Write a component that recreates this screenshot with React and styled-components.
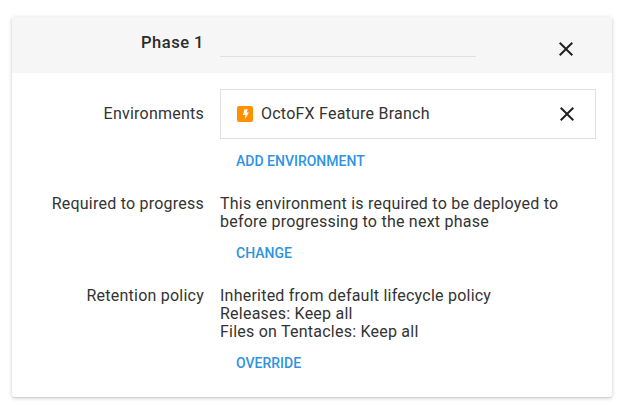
import React from "react";
import styled, { createGlobalStyle } from "styled-components";

const Global = createGlobalStyle`
  * { box-sizing: border-box; }
  body { margin: 0; background: #fff; font-family: Roboto, sans-serif; font-size: 16px; font-weight: 400; line-height: 18px; letter-spacing: 0.23px; color: #333; }
`;
const Page = styled.main`
  padding: 17px 10px 10px 12px;
`;
const Card = styled.section`
  width: 600px;
  height: 380px;
  background: #fff;
  border-radius: 2px;
  overflow: hidden;
  box-shadow: 0 1px 4px rgba(0, 0, 0, 0.2), 0 1px 1px rgba(0, 0, 0, 0.08);
`;
const Row = styled.div`
  display: grid;
  grid-template-columns: 192px 1fr;
  column-gap: 16px;
  padding-right: 16px;
`;
const Header = styled(Row)`
  height: 56px;
  background: #f6f6f6;
  margin-bottom: 16px;
`;
const Label = styled.div`
  text-align: right;
  padding-top: ${(p) => p.$top || 0}px;
`;
const Title = styled(Label)`
  font-size: 16.5px;
  font-weight: 500;
  letter-spacing: 0.5px;
  color: #2b2b2b;
`;
const TitleField = styled.div`
  display: flex;
  justify-content: space-between;
`;
const Underline = styled.div`
  width: 256px;
  height: 40px;
  border-bottom: 1px solid #e0e0e0;
`;
const CloseButton = styled.button`
  display: flex;
  border: 0;
  padding: 0;
  background: none;
  margin: ${(p) => p.$margin || 0};
`;
const Chip = styled.div`
  display: flex;
  align-items: center;
  height: 50px;
  padding: 0 16px;
  border: 1px solid #e0e0e0;
`;
const Name = styled.span`
  flex: 1;
  margin-left: 8px;
`;
const Action = styled.button`
  display: block;
  border: 0;
  background: none;
  margin: ${(p) => p.$margin};
  padding: 0 16px;
  height: 18px;
  font: 500 14px/18px Roboto, sans-serif;
  letter-spacing: 0;
  color: #2f93e0;
`;
const Close = () => (
  <svg width="24" height="24" viewBox="0 0 24 24" fill="#222">
    <path d="M19 6.41L17.59 5 12 10.59 6.41 5 5 6.41 10.59 12 5 17.59 6.41 19 12 13.41 17.59 19 19 17.59 13.41 12z" />
  </svg>
);
const Bolt = () => (
  <svg width="16" height="16" viewBox="0 0 16 16">
    <rect width="16" height="16" rx="2" fill="#ff9000" />
    <path d="M7.4 3.2h3.4L9.7 6.4h2.2L7.7 13.6 8.4 9H6z" fill="#fff" />
  </svg>
);

export default function App() {
  return (
    <Page>
      <Global />
      <Card>
        <Header>
          <Title $top={17}>Phase 1</Title>
          <TitleField>
            <Underline />
            <CloseButton aria-label="Remove phase" $margin="20px 18px 0 0"><Close /></CloseButton>
          </TitleField>
        </Header>
        <Row>
          <Label $top={16}>Environments</Label>
          <div>
            <Chip>
              <Bolt />
              <Name>OctoFX Feature Branch</Name>
              <CloseButton aria-label="Remove environment"><Close /></CloseButton>
            </Chip>
            <Action $margin="13px 0 25px">ADD ENVIRONMENT</Action>
          </div>
        </Row>
        <Row>
          <Label>Required to progress</Label>
          <div>
            This environment is required to be deployed to<br />before progressing to the next phase
            <Action $margin="13px 0 25px">CHANGE</Action>
          </div>
        </Row>
        <Row>
          <Label>Retention policy</Label>
          <div>
            Inherited from default lifecycle policy<br />Releases: Keep all<br />Files on Tentacles: Keep all
            <Action $margin="13px 0 0">OVERRIDE</Action>
          </div>
        </Row>
      </Card>
    </Page>
  );
}
